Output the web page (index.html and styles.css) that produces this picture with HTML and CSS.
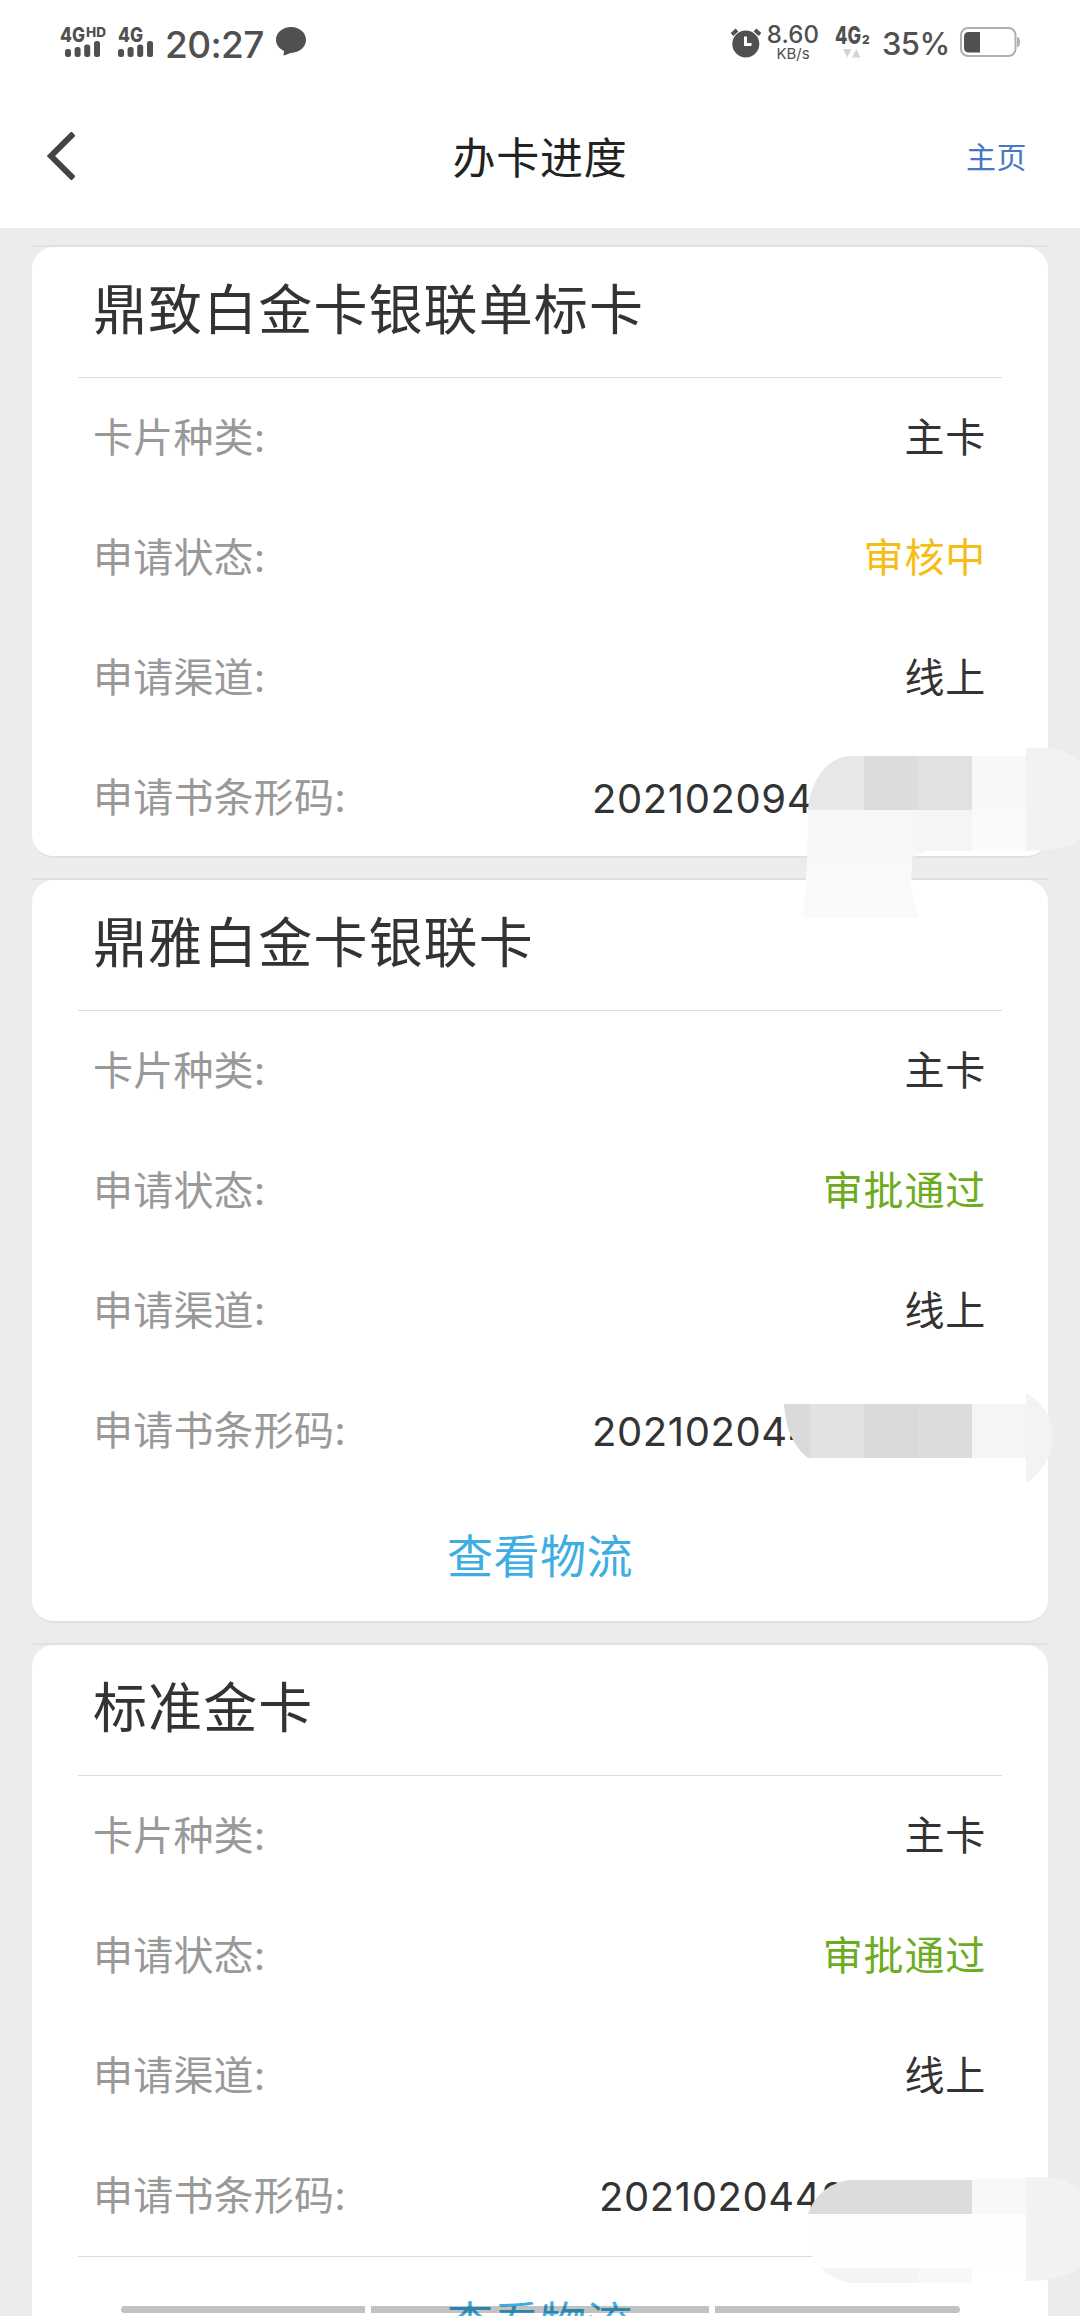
FILE: index.html
```html
<!DOCTYPE html>
<html lang="zh-CN">
<head>
<meta charset="utf-8">
<title>办卡进度</title>
<link rel="stylesheet" href="styles.css">
</head>
<body>
<div class="screen">
  <header class="top">
    <div class="status">
      <div class="status-left">
        <svg class="signal-hd" width="48" height="34" viewBox="0 0 48 34">
          <g class="net"><text x="0" y="17" font-size="20" textLength="25" lengthAdjust="spacingAndGlyphs">4G</text><text x="26" y="12" font-size="13" textLength="20" lengthAdjust="spacingAndGlyphs">HD</text></g>
          <rect x="5" y="24" width="6" height="8" rx="2.5"/><rect x="14.600" y="22" width="6" height="10" rx="2.500"/><rect x="24.200" y="19.500" width="6" height="12.500" rx="2.500"/><rect x="34" y="16" width="6" height="16" rx="2.500"/>
        </svg>
        <svg class="signal" width="38" height="34" viewBox="0 0 38 34">
          <g class="net"><text x="0" y="17" font-size="20" textLength="25" lengthAdjust="spacingAndGlyphs">4G</text></g>
          <rect x="0" y="24" width="6" height="8" rx="2.5"/><rect x="9.600" y="22" width="6" height="10" rx="2.500"/><rect x="19.200" y="19.500" width="6" height="12.500" rx="2.500"/><rect x="29" y="16" width="6" height="16" rx="2.500"/>
        </svg>
        <span class="clock">20:27</span>
        <svg class="chat" width="30" height="30" viewBox="0 0 30 30"><path d="M15 0C23.300 0 30 5.500 30 12.800S23.500 25.500 15 26C12.500 26.200 10.500 28 7.500 28.500L8 24C3.500 22 0 18 0 12.800 0 5.500 6.700 0 15 0Z"/></svg>
      </div>
      <div class="status-right">
        <svg class="alarm" width="30" height="30" viewBox="0 0 30 30"><circle cx="14.800" cy="16" r="13.500"/><path class="bell" d="M1 6.500 6 2M29 6.500 24 2"/><path class="hands" d="M14.500 8.500V16.500H20.500"/></svg>
        <div class="speed"><span class="speed-value">8.60</span><span class="speed-unit">KB/s</span></div>
        <svg class="data" width="36" height="36" viewBox="0 0 36 36"><g class="net"><text x="0" y="19" font-size="24" textLength="26" lengthAdjust="spacingAndGlyphs">4G</text><text x="27" y="19" font-size="12">2</text></g><path class="arrows" d="M8 24H16.500L12.300 32.500ZM17 32.500H25.500L21.300 24Z"/></svg>
        <span class="percent">35%</span>
        <svg class="battery" width="60" height="30" viewBox="0 0 60 30"><rect class="shell" x="1" y="1" width="54.500" height="28" rx="7"/><path d="M20 5V25.500H9Q4 25.500 4 20.500V10Q4 5 9 5Z"/><path class="cap" d="M57 10Q60 10 60 15T57 20Z"/></svg>
      </div>
    </div>
    <nav class="nav">
      <svg class="back" width="28" height="48" viewBox="0 0 28 48"><path d="M26.500 1.500 4 24 26.500 46.500"/></svg>
      <h1 class="nav-title">办卡进度</h1>
      <a class="home">主页</a>
    </nav>
  </header>

  <main class="list">
    <section class="card">
      <h2 class="card-title">鼎致白金卡银联单标卡</h2>
      <dl class="rows">
        <div class="row"><dt>卡片种类:</dt><dd>主卡</dd></div>
        <div class="row"><dt>申请状态:</dt><dd class="pending">审核中</dd></div>
        <div class="row"><dt>申请渠道:</dt><dd>线上</dd></div>
        <div class="row"><dt>申请书条形码:</dt><dd class="code">202102094</dd></div>
      </dl>
    </section>
    <section class="card">
      <h2 class="card-title">鼎雅白金卡银联卡</h2>
      <dl class="rows">
        <div class="row"><dt>卡片种类:</dt><dd>主卡</dd></div>
        <div class="row"><dt>申请状态:</dt><dd class="passed">审批通过</dd></div>
        <div class="row"><dt>申请渠道:</dt><dd>线上</dd></div>
        <div class="row"><dt>申请书条形码:</dt><dd class="code">202102044</dd></div>
      </dl>
      <a class="track">查看物流</a>
    </section>
    <section class="card">
      <h2 class="card-title">标准金卡</h2>
      <dl class="rows">
        <div class="row"><dt>卡片种类:</dt><dd>主卡</dd></div>
        <div class="row"><dt>申请状态:</dt><dd class="passed">审批通过</dd></div>
        <div class="row"><dt>申请渠道:</dt><dd>线上</dd></div>
        <div class="row"><dt>申请书条形码:</dt><dd class="code code-late">2021020442</dd></div>
      </dl>
      <a class="track ruled">查看物流</a>
    </section>
  </main>

  <svg class="masks" width="1080" height="2316" viewBox="0 0 1080 2316">
    <!-- first barcode -->
    <path fill="#e7e7e7" d="M808 810C810 780 828 758 848 756H864V810Z"/>
    <path fill="#dcdcdc" d="M864 756H918V810H864Z"/>
    <path fill="#e1e1e1" d="M918 756H972V810H918Z"/>
    <path fill="#f8f8f8" d="M972 756H1026V810H972Z"/>
    <path fill="#f7f7f7" d="M808 810H918V855L912 857V864H807Z"/>
    <path fill="#f4f6f5" d="M918 810H972V851H926L918 855Z"/>
    <path fill="#fafafa" d="M972 810H1026V851H972Z"/>
    <path fill="#f9fafa" d="M807 864H912L911 890 918 918H803Z"/>
    <path fill="#f1f2f4" d="M1026 748H1048Q1066 750 1080 761V840Q1062 851 1026 851Z"/>
    <!-- second barcode -->
    <path fill="#dadada" d="M784 1404H810V1458H808Q786 1441 784 1404Z"/>
    <path fill="#e2e2e2" d="M810 1404H864V1458H810Z"/>
    <path fill="#d9d9d9" d="M864 1404H918V1458H864Z"/>
    <path fill="#dcdcdc" d="M918 1404H972V1458H918Z"/>
    <path fill="#f5f5f5" d="M972 1404H1026V1458H972Z"/>
    <path fill="#f2f3f5" d="M1026 1393C1043 1403 1053 1418 1052.500 1437C1052 1457 1042 1473 1026 1483Z"/>
    <!-- third barcode -->
    <path fill="#fefefe" d="M808 2214H1026V2268H822Q810 2260 808 2240Z"/>
    <path fill="#dcdcdc" d="M808 2214C814 2196 830 2181 852 2180H972V2214Z"/>
    <path fill="#f8f8f8" d="M972 2179 1026 2178V2214H972Z"/>
    <path fill="#f4f4f4" d="M821 2268H918V2283H850Q834 2280 821 2268Z"/>
    <path fill="#f8f8f8" d="M918 2268H972V2283H918Z"/>
    <path fill="#f1f2f4" d="M1026 2177H1048Q1066 2178 1080 2190V2268Q1062 2281 1026 2281Z"/>
  </svg>
  <div class="gesture"><i></i><i></i><i></i></div>
</div>
</body>
</html>
```
FILE: styles.css
```css
* { box-sizing: border-box; }
body { margin: 0; background: #ebecee; font-family: Inter, "Noto Sans CJK SC", sans-serif; color: #333; }
.screen { position: relative; width: 1080px; height: 2316px; overflow: hidden; }
h1, h2, dl, dd { margin: 0; font-weight: 400; }

.top { height: 228px; background: #fff; }
.status { display: flex; justify-content: space-between; height: 84px; padding: 24px 60px 0; color: #505050; fill: #505050; }
.status-left, .status-right { display: flex; align-items: flex-start; }
.status svg { display: block; flex: none; overflow: visible; }
.net { font-weight: 800; }
.signal-hd { margin-top: 1px; }
.signal { margin: 1px 0 0 10px; }
.clock { width: 110px; margin-left: 9px; font-size: 37px; line-height: 41px; font-weight: 500; letter-spacing: -.6px; }
.chat { margin: 3px 0 0 1px; }
.alarm { margin-top: 4px; }
.bell { stroke: #505050; stroke-width: 4; }
.hands { fill: none; stroke: #fff; stroke-width: 3; }
.speed { display: flex; flex-direction: column; align-items: center; width: 54px; margin-left: 5px; }
.speed-value { font-size: 24px; line-height: 21px; font-weight: 500; letter-spacing: .2px; }
.speed-unit { font-size: 15px; line-height: 17px; }
.data { margin: 1px 0 0 15px; }
.arrows { fill: #d5d5d5; }
.percent { width: 67px; margin-left: 11px; font-size: 31px; line-height: 39px; font-weight: 500; letter-spacing: -.6px; }
.battery { margin: 3px 0 0 11px; }
.shell { fill: none; stroke: #b0b0b0; stroke-width: 2; }
.cap { fill: #b0b0b0; }

.nav { display: grid; grid-template-columns: 200px 1fr 200px; align-items: center; height: 144px; padding: 0 53px 0 47px; }
.back { display: block; fill: none; stroke: #444; stroke-width: 6; }
.nav-title { padding: 4px 0 0 6px; font-size: 43px; letter-spacing: .8px; line-height: 60px; text-align: center; color: #222; }
.home { padding-bottom: 2px; font-size: 30px; letter-spacing: .5px; text-align: right; color: #4877c4; }

.list { display: flex; flex-direction: column; gap: 20px; padding: 17px 32px 0; }
.card { border-radius: 0 0 22px 22px; border-top: 2px solid #dfe0e1; border-bottom: 2px solid #dfe0e1; background: radial-gradient(circle at 22px 22px, #fff 21.500px, #ebecee 22.500px) 0 0 / 22px 22px no-repeat, radial-gradient(circle at 0 22px, #fff 21.500px, #ebecee 22.500px) 100% 0 / 22px 22px no-repeat, #fff; }
.card-title { height: 131px; margin: 0 46px; padding: 0 15px; border-bottom: 1px solid #dcdcdc; font-size: 54px; letter-spacing: 1.100px; line-height: 128px; }
.rows { height: 478px; padding: 0 62px 0 61px; }
.row { display: flex; justify-content: space-between; align-items: center; height: 120px; font-size: 40px; }
dt, dd { padding-bottom: 6px; letter-spacing: .8px; }
dt { color: #999; letter-spacing: .2px; }
.pending { color: #f5bd16; }
.passed { color: #6cac1e; }
.code { width: 394px; padding-bottom: 0; letter-spacing: .6px; }
.code-late { width: 387px; }
.track { display: flex; align-items: center; justify-content: center; height: 132px; padding-bottom: 5px; color: #3eaee2; font-size: 46px; letter-spacing: .5px; }
.ruled { margin: 2px 46px 0; border-top: 1px solid #dcdcdc; }

.masks { position: absolute; left: 0; top: 0; }
.gesture { position: absolute; left: 121px; top: 2306px; display: grid; grid-template-columns: 244px 338px 245px; gap: 6px; }
.gesture i { height: 7px; background: rgba(0, 0, 0, .24); }
.gesture i:first-child { border-radius: 4px 0 0 4px; }
.gesture i:last-child { border-radius: 0 4px 4px 0; }
```
